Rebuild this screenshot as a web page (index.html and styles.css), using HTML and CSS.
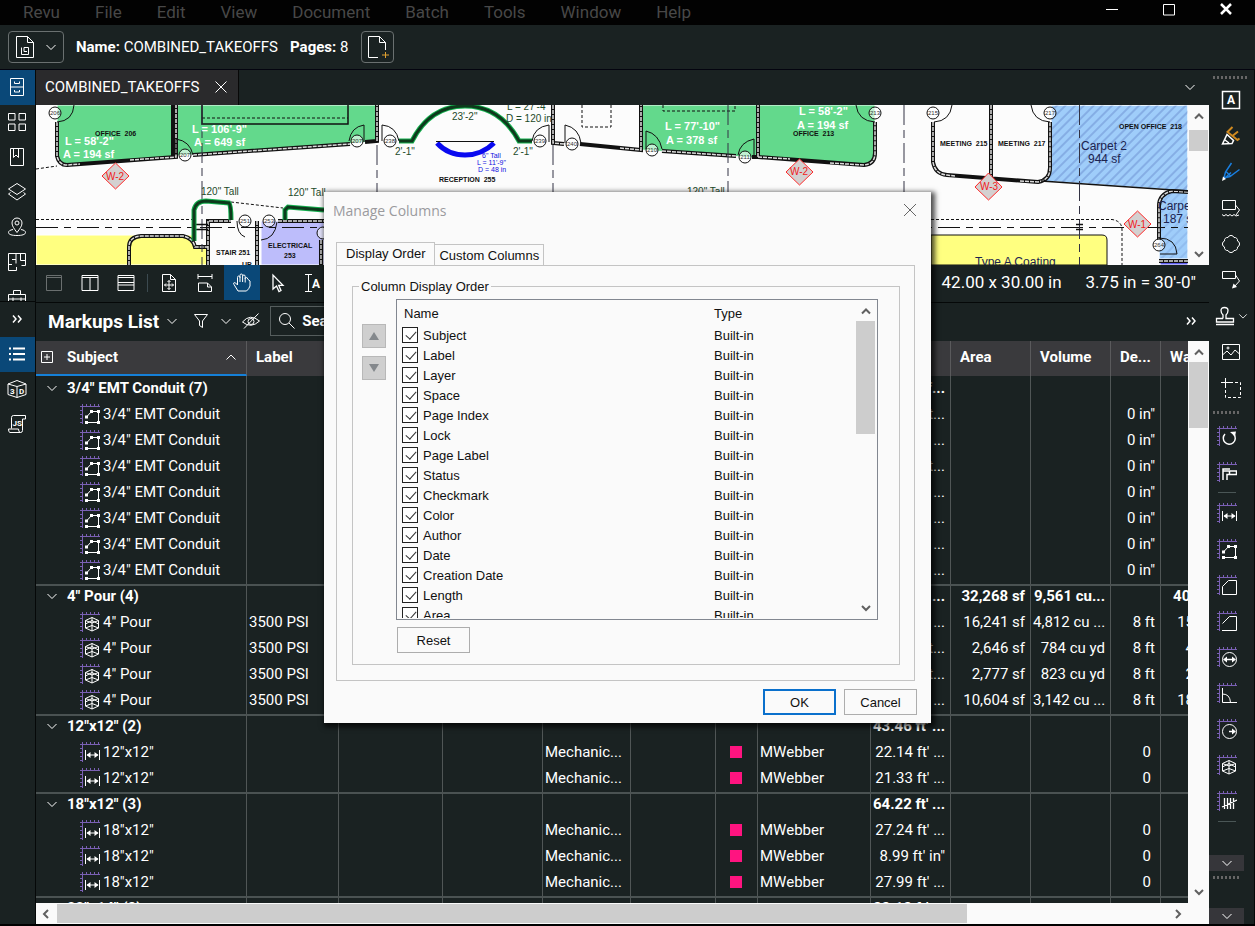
FILE: index.html
```html
<!DOCTYPE html>
<html lang="en">
<head>
  <meta charset="UTF-8">
  <meta name="viewport" content="width=device-width, initial-scale=1.0">
  <title>Revu</title>
  <link rel="stylesheet" href="styles.css">
</head>
<body>

  <!-- Icon sprite -->
  <svg class="sprite">
    <symbol id="ruler" viewBox="0 0 20 20"><path d="M0 2.5H20M2.5 0V20M6.500 0V2M10.500 0V2M14.500 0V2M18.500 0V2M0 6.500H2M0 10.500H2M0 14.500H2M0 18.500H2" stroke="#7a60b4" fill="none"/></symbol>
    <symbol id="i-poly" viewBox="0 0 20 20"><use href="#ruler"/><path d="M6.500 13L11.500 7.500H18.500V18.500H6.500" /><path d="M5 11.500h3v3h-3zM10 6h3v3h-3zM17 6h3v3h-3zM17 17h3v3h-3zM5 17h3v3h-3z" fill="#fff" stroke="none"/></symbol>
    <symbol id="i-volume" viewBox="0 0 20 20"><use href="#ruler"/><path d="M5.500 8.500L12 5.500L18.500 8.500V16L12 19L5.500 16ZM5.500 8.500L12 11L18.500 8.500M12 5.500V19M5.500 16L12 13.500L18.500 16M5.500 12L12 8.500L18.500 12"/></symbol>
    <symbol id="i-length" viewBox="0 0 20 20"><use href="#ruler"/><path d="M5.500 8V18M19.500 8V18M7 13H18"/><path d="M6.500 13l4-3v6zM18.500 13l-4-3v6z" fill="#fff" stroke="none"/></symbol>
    <symbol id="i-down" viewBox="0 0 12 12"><path d="M1.500 4L6 8.500L10.500 4"/></symbol>
    <symbol id="i-up" viewBox="0 0 12 12"><path d="M1.500 8.500L6 4L10.500 8.500"/></symbol>
    <symbol id="i-more" viewBox="0 0 12 12"><path d="M2 2.500L5 6L2 9.500M7 2.500L10 6L7 9.500" stroke-width="1.500"/></symbol>
  </svg>

  <!-- Menu bar -->
  <header class="menubar">
    <nav class="menus">
      <button>Revu</button>
      <button>File</button>
      <button>Edit</button>
      <button>View</button>
      <button>Document</button>
      <button>Batch</button>
      <button>Tools</button>
      <button>Window</button>
      <button>Help</button>
    </nav>
    <div class="window-controls">
      <button aria-label="Minimize"><svg width="14" height="14"><path d="M1 7.500H13"/></svg></button>
      <button aria-label="Maximize"><svg width="14" height="14"><path d="M1.500 2.500H12.500V13H1.500Z"/></svg></button>
      <button aria-label="Close"><svg width="14" height="14"><path d="M2 2L12 12M12 2L2 12" stroke-width="2.500"/></svg></button>
    </div>
  </header>

  <!-- Document info -->
  <div class="docbar">
    <button class="outline-btn" aria-label="Document properties">
      <svg width="20" height="24"><path d="M1.500 1.500H12.500L18.500 7.500V22.500H1.500ZM12.500 1.500V7.500H18.500M6.500 12.500V19.500H13.500V12.500H9V16.500H12"/></svg>
      <svg width="12" height="12"><use href="#i-down"/></svg>
    </button>
    <p class="doc-name"><b>Name:</b> COMBINED_TAKEOFFS</p>
    <p class="doc-pages"><b>Pages:</b> 8</p>
    <button class="outline-btn" aria-label="Add page">
      <svg width="22" height="24"><path d="M11 22.500H1.500V1.500H12.500L18.500 7.500V15M12.500 1.500V7.500H18.500"/><path d="M18.500 17V23M15 20H22" stroke="#e0a030"/></svg>
    </button>
  </div>

  <div class="workspace">

    <!-- Left rail -->
    <aside class="rail">
      <div class="rail-top">
        <button class="active" aria-label="File access"><svg width="18" height="20"><path d="M2.500 1.500H15.500V18.500H2.500ZM2.500 10H15.500M6.500 4.500V6.500H11.500V4.500M6.500 13V15H11.500V13"/></svg></button>
        <button aria-label="Thumbnails"><svg width="20" height="20"><path d="M1.500 1.500H8V8H1.500ZM12 1.500H18.500V8H12ZM1.500 12H8V18.500H1.500ZM12 12H18.500V18.500H12Z"/></svg></button>
        <button aria-label="Bookmarks"><svg width="18" height="20"><path d="M2.500 1.500H15.500V18.500H2.500ZM5.500 1.500V10.500L8 8L10.500 10.500V1.500"/></svg></button>
        <button aria-label="Layers"><svg width="20" height="20"><path d="M10 1.500L18.500 7L10 12.500L1.500 7ZM3.500 10.500L1.500 12L10 18L18.500 12L16.500 10.500"/></svg></button>
        <button aria-label="Places"><svg width="20" height="20"><path d="M10 15.500C7 11.500 5 9 5 6A5 5 0 0 1 15 6C15 9 13 11.500 10 15.500Z"/><circle cx="10" cy="6" r="2"/><path d="M6 12.500C3 13 1.500 14 1.500 15.500C1.500 17.500 5 18.500 10 18.500S18.500 17.500 18.500 15.500C18.500 14 17 13 14 12.500"/></svg></button>
        <button aria-label="Spaces"><svg width="20" height="20"><path d="M9 11.500V1.500M9 7.500H5M1.500 14V1.500H18.500V13.500H14.500M1.500 10V18.500H9.500V15M1.500 12.500H5M13.500 1.500V8.500H18.500"/></svg></button>
        <button aria-label="Tool chest"><svg width="20" height="20"><path d="M1.500 7.500H18.500V18.500H1.500ZM6.500 7.500V3.500H13.500V7.500M1.500 12H18.500M6 10.500V14M14 10.500V14"/></svg></button>
      </div>
      <div class="rail-bottom">
        <button aria-label="Expand"><svg width="12" height="12"><use href="#i-more"/></svg></button>
        <button class="active" aria-label="Markups list"><svg width="18" height="16"><path d="M5 2.500H17M5 8H17M5 13.500H17M1 2.500H3M1 8H3M1 13.500H3" stroke-width="2"/></svg></button>
        <button aria-label="3D model tree"><svg width="20" height="20"><path d="M1 5L10 1.500L19 5V15.500L10 18.500L1 15.500ZM1 5L10 7.500L19 5M10 7.500V18.500"/><text x="3" y="15" class="ico-text">3</text><text x="12" y="15" class="ico-text">D</text></svg></button>
        <button aria-label="JavaScript"><svg width="20" height="20"><path d="M4.500 14.500V3.500Q4.500 1.500 6.500 1.500H18.500V5H15.500V16.500Q15.500 18.500 13.500 18.500H3Q1.500 18.500 1.500 15H11.500Q11.500 18.500 13.500 18.500"/><text x="5.500" y="12" class="ico-text">JS</text></svg></button>
      </div>
    </aside>

    <main class="center">
      <div class="tabs">
        <div class="tab">
          <span>COMBINED_TAKEOFFS</span>
          <button aria-label="Close tab"><svg width="14" height="14"><path d="M1.500 1.500L12.500 12.500M12.500 1.500L1.500 12.500"/></svg></button>
        </div>
        <button class="tab-list" aria-label="Open tabs"><svg width="12" height="12"><use href="#i-down"/></svg></button>
      </div>

      <!-- Floor plan -->
      <div class="viewer">
        <svg class="plan" viewBox="36 105 1152 160" preserveAspectRatio="xMinYMin slice">
          <defs>
            <pattern id="hatch" width="13" height="13" patternUnits="userSpaceOnUse" patternTransform="rotate(45)"><path d="M3 0V13M9 0V13" stroke="#6c8fd0" stroke-width="1" fill="none"/></pattern>
          </defs>
          <rect x="36" y="105" width="1152" height="160" fill="#fcfcfc"/>

          <!-- rooms -->
          <g fill="#63d98c">
            <path d="M57 105V158Q59 165 67 165L173 157V105Z"/>
            <path d="M175 105V156L360 143L377 141V105Z"/>
            <path d="M641 105V150L757 158V105Z"/>
            <path d="M759 105V158L864 165Q875 164 875 153V105Z"/>
          </g>
          <path d="M1051 105V168Q1050 178 1041 181L1188 191V105Z" fill="#9fcdfa"/>
          <path d="M1051 105V168Q1050 178 1041 181L1188 191V105Z" fill="url(#hatch)"/>
          <path d="M1188 192L1172 191Q1159 194 1159 206V265H1188Z" fill="#9fcdfa"/>
          <path d="M1188 192L1172 191Q1159 194 1159 206V265H1188Z" fill="url(#hatch)" opacity=".5"/>
          <path d="M1160 259H1188V265H1160Z" fill="#5c5cf0"/>
          <path d="M36 235H193L196 247H208V265H36Z" fill="#ffff80"/>
          <path d="M931 235H1102Q1107 235 1107 240V265H931Z" fill="#ffff80" stroke="#111"/>
          <path d="M261 221H324V265H261Z" fill="#bdbdfb"/>

          <!-- walls: black line with a light core -->
          <g class="wall">
            <path d="M57 122V156Q59 165 67 165L176 157V105"/>
            <path d="M173 105V157M193 155L350 144M365 142L377 141V105"/>
            <path d="M553 105V143L564 144M580 144L641 150V105M662 151L736 156M752 157L758 157V105"/>
            <path d="M758 157L864 165Q875 164 875 153V122"/>
            <path d="M933 122V162Q935 174 947 175L1038 182Q1050 180 1050 168V122M991 105V178"/>
            <path d="M1188 192L1172 191Q1159 194 1159 206V240M1159 261H1188"/>
            <path d="M129 265V247Q129 237 141 236H183Q193 238 195 247H208"/>
            <path d="M208 265V221H231M257 221V265M278 221H324M321 240V265"/>
          </g>
          <g class="core">
            <path d="M57 122V156Q59 165 67 165L80 164M130 160L176 157V105"/>
            <path d="M193 155L350 144M377 141V105"/>
            <path d="M553 105V143L564 144M620 148L641 150V105M662 151L736 156M758 157V105"/>
            <path d="M758 157L790 159M830 163L864 165Q875 164 875 153V122"/>
            <path d="M933 122V162Q935 174 947 175L955 176M1020 181L1038 182Q1050 180 1050 168V122M991 105V178"/>
            <path d="M1188 192L1172 191Q1159 194 1159 206V240M1159 261H1188"/>
            <path d="M129 265V247Q129 237 141 236H183Q193 238 195 247H208"/>
            <path d="M208 265V221H231M257 221V265M278 221H324M321 240V265"/>
          </g>

          <g fill="none" stroke="#111">
            <path d="M202 105V124H348V105M1041 181L1188 191" stroke-width="1.500"/>
            <path d="M202 118H348M582 105V127H611V105M663 105V111H735V105" stroke-dasharray="3 2"/>
            <path d="M36 169L57 166M231 202L283 208M36 219.500H195M931 219.500H1112Q1122 221 1122 230V265" stroke-dasharray="3 2"/>
            <path d="M36 227.500H1188" stroke-dasharray="22 6 7 6"/>
            <path d="M202 105V265M377 145V192M553 145V192M728 105V192M904 105V192M1079.500 105V265" stroke-dasharray="20 5 8 5" stroke="#334"/>
            <path d="M196 224.500H208M196 229.500H208M1076 224.500H1083M1076 229.500H1083" stroke-width="1.500"/>
          </g>

          <!-- doors -->
          <g fill="none" stroke="#111">
            <path d="M74 105Q73 121 57 122M176 155V139Q190 141 193 155M364 142V125Q351 127 349 141M382 141V125Q396 126 399 141M549 142V125Q534 127 532 141M565 143V125Q579 128 581 143M646 149V131Q659 134 662 149M754 156V139Q740 142 738 155M856 105Q858 121 875 122M952 105Q950 121 934 122M1031 105Q1033 121 1050 122M1159 238Q1176 238 1177 254H1160M237 221Q237 234 245 237M261 240Q275 239 277 222"/>
            <g fill="#fff" fill-opacity=".6">
              <circle cx="55" cy="113" r="6"/><circle cx="185" cy="155" r="6"/><circle cx="357" cy="141" r="6"/><circle cx="390" cy="141" r="6"/><circle cx="540" cy="141" r="6"/><circle cx="572" cy="144" r="6"/><circle cx="652" cy="150" r="6"/><circle cx="745" cy="157" r="6"/><circle cx="875" cy="113" r="6"/><circle cx="933" cy="113" r="6"/><circle cx="1050" cy="113" r="6"/><circle cx="1159" cy="245" r="6"/><circle cx="245" cy="221" r="6"/><circle cx="269" cy="221" r="6"/><circle cx="323" cy="233" r="6"/>
            </g>
          </g>
          <g class="door-no">
            <text x="55" y="115">206</text><text x="185" y="157">207</text><text x="357" y="143">207</text><text x="390" y="143">238</text><text x="540" y="143">239</text><text x="572" y="146">240</text><text x="652" y="152">210</text><text x="745" y="159">211</text><text x="875" y="115">213</text><text x="933" y="115">215</text><text x="1050" y="115">217</text><text x="1159" y="247">264</text><text x="245" y="223">251</text><text x="269" y="223">253</text>
          </g>

          <!-- green and blue markups -->
          <g fill="none" stroke="#14b04e" stroke-width="5">
            <path d="M399 141H412Q430 106 465 106T519 141H532M194 241V210Q196 201 206 201L229 203Q231 205 231 220M285 220V210L288 207L324 210"/>
          </g>
          <path d="M399 141H412Q430 106 465 106T519 141H532M194 241V210Q196 201 206 201L229 203Q231 205 231 220M285 220V210L288 207L324 210" fill="none" stroke="#0d3a1c" stroke-width="3"/>
          <path d="M437 143Q448 155 465 155T494 143" fill="none" stroke="#0a0af0" stroke-width="5"/>
          <path d="M436 141.500H494" stroke="#111"/>

          <!-- revision diamonds -->
          <g fill="#d4d0d0" stroke="#ff2a2a">
            <path d="M115.500 163L129 176L115.500 189L102 176Z"/><path d="M799.500 159L813 172L799.500 185L786 172Z"/><path d="M988.500 173L1002 187L988.500 200L975 187Z"/><path d="M1137.500 211L1151 224L1137.500 237L1124 224Z"/>
          </g>
          <g class="dia">
            <text x="115" y="180">W-2</text><text x="799" y="175">W-2</text><text x="989" y="190">W-3</text><text x="1137" y="228">W-1</text>
          </g>

          <g class="room">
            <text x="95" y="136">OFFICE  206</text><text x="439" y="182">RECEPTION  255</text><text x="793" y="136">OFFICE  213</text><text x="940" y="146">MEETING  215</text><text x="998" y="146">MEETING  217</text><text x="1119" y="129">OPEN OFFICE  218</text><text x="216" y="255">STAIR 251</text><text x="268" y="248">ELECTRICAL</text><text x="284" y="258">253</text><text x="242" y="267">UP</text>
          </g>
          <g class="size">
            <text x="65" y="145">L = 58'-2"</text><text x="63" y="158">A = 194 sf</text><text x="192" y="133">L = 106'-9"</text><text x="194" y="146">A = 649 sf</text><text x="665" y="130">L = 77'-10"</text><text x="666" y="144">A = 378 sf</text><text x="799" y="115">L = 58'-2"</text><text x="797" y="129">A = 194 sf</text>
          </g>
          <g class="tall">
            <text x="201" y="195">120" Tall</text><text x="288" y="196">120" Tall</text><text x="687" y="195">120" Tall</text><text x="452" y="120">23'-2"</text><text x="507" y="110">L = 27'-4"</text><text x="506" y="122">D = 120 in</text><text x="395" y="155">2'-1"</text><text x="513" y="155">2'-1"</text>
          </g>
          <g class="blue">
            <text x="482" y="158">6" Tall</text><text x="477" y="165">L = 11'-9"</text><text x="478" y="172">D = 48 in</text>
          </g>
          <g class="carpet">
            <text x="1081" y="150">Carpet 2</text><text x="1088" y="163">944 sf</text><text x="1158" y="210">Carpe</text><text x="1163" y="223">187 s</text><text x="975" y="266">Type A Coating</text>
          </g>
        </svg>
        <div class="vscroll">
          <svg width="14" height="21"><path d="M3 13.500L7 9.500L11 13.500"/></svg>
          <div class="vscroll-track"><div class="thumb short"></div></div>
          <svg width="14" height="21"><path d="M3 8L7 12L11 8"/></svg>
        </div>
      </div>

      <!-- Status bar -->
      <div class="statusbar">
        <button class="dim" aria-label="Single view"><svg width="18" height="18"><path d="M1.500 1.500H16.500V16.500H1.500ZM1.500 3.500H16.500"/></svg></button>
        <button aria-label="Split vertical"><svg width="18" height="18"><path d="M1 1.500H17V16.500H1ZM1 3.500H17M9 3V17"/></svg></button>
        <button aria-label="Split horizontal"><svg width="18" height="18"><path d="M1 1.500H17V16.500H1ZM1 3.500H17M1 8.500H17M1 11H17"/></svg></button>
        <span class="sep"></span>
        <button aria-label="Single page"><svg width="20" height="20"><path d="M2.500 1.500H10.500L15.500 6.500V18.500H2.500ZM10.500 1.500V6.500H15.500M9 7.500V16.500M4.500 12H13.500M7.500 9L9 7.500L10.500 9M7.500 15L9 16.500L10.500 15M6 10.500L4.500 12L6 13.500M12 10.500L13.500 12L12 13.500"/></svg></button>
        <button aria-label="Fit width"><svg width="20" height="20"><path d="M2 1V6M16 1V6M2 3.500H16M2.500 10H11.500L15.500 14V18.500H2.500ZM11.500 10V14H15.500"/></svg></button>
        <button class="active" aria-label="Pan"><svg width="20" height="20"><path d="M6 18L2 11.500Q1 9.500 2.500 9.500Q3.500 9.500 5.500 12V4.500Q5.500 3 6.700 3T8 4.500V2.500Q8 1 9.300 1T10.600 2.500V3Q10.600 2 11.900 2T13.200 3.500V5.500Q13.200 4.500 14.400 4.500T15.600 6L18 8V13Q17 16 14.500 18ZM8 4V9M10.600 3V9M13.200 5V9.500"/></svg></button>
        <button aria-label="Select"><svg width="18" height="20"><path d="M4 2V16L7.500 13L10 18.500L12 17.500L9.700 12.300H14Z" stroke-width="1.300"/></svg></button>
        <button aria-label="Select text"><svg width="20" height="20"><path d="M4.500 1V19M1 1.500H8M1 18.500H8"/><text x="8" y="15" class="ico-a">A</text></svg></button>
        <span class="fill"></span>
        <span class="readout">42.00 x 30.00 in</span>
        <span class="readout">3.75 in = 30'-0"</span>
      </div>

      <!-- Markups list -->
      <div class="list-bar">
        <h1>Markups List</h1>
        <svg width="12" height="12"><use href="#i-down"/></svg>
        <svg class="funnel" width="16" height="16"><path d="M1.500 1.500H14.500L9.500 8V14.500L6.500 12.500V8Z"/></svg>
        <svg width="12" height="12"><use href="#i-down"/></svg>
        <svg class="eye" width="20" height="18"><path d="M1.500 10Q9 1 18.500 9Q10 17 1.500 10ZM17.500 1.500L3 16.500"/><circle cx="10" cy="9.500" r="3"/></svg>
        <label class="search">
          <svg width="18" height="18"><circle cx="7" cy="7" r="5.500"/><path d="M11 11L16.500 16.500"/></svg>
          <input type="text" placeholder="Search" aria-label="Search">
        </label>
        <button class="more" aria-label="More"><svg width="12" height="12"><use href="#i-more"/></svg></button>
      </div>

      <div class="list-body">
        <div class="table-wrap">
          <table>
            <colgroup>
              <col class="c-subject"><col class="c-label"><col class="c-layer"><col class="c-space"><col class="c-page"><col class="c-status"><col class="c-color"><col class="c-author"><col class="c-num"><col class="c-num"><col class="c-num"><col class="c-depth"><col class="c-wall">
            </colgroup>
            <thead>
              <tr>
                <th class="sorted"><div class="head"><svg width="12" height="12"><path d="M.5 .5H11.500V11.500H.5ZM3 6H9M6 3V9"/></svg><span>Subject</span><svg width="12" height="12"><use href="#i-up"/></svg></div></th>
                <th>Label</th><th></th><th></th><th></th><th></th><th></th><th></th><th></th>
                <th>Area</th><th>Volume</th><th>De...</th><th>Wa...</th>
              </tr>
            </thead>
            <tbody id="markups"></tbody>
          </table>
        </div>
        <div class="vscroll">
          <svg width="14" height="21"><path d="M3 13.500L7 9.500L11 13.500"/></svg>
          <div class="vscroll-track"><div class="thumb tall-thumb"></div></div>
          <svg width="14" height="21"><path d="M3 8L7 12L11 8"/></svg>
        </div>
      </div>
      <div class="hscroll">
        <svg width="21" height="14"><path d="M12 3L8 7L12 11"/></svg>
        <div class="hscroll-track"><div class="thumb"></div></div>
        <svg width="21" height="14"><path d="M9 3L13 7L9 11"/></svg>
      </div>
    </main>

    <!-- Right toolbar -->
    <aside class="tools">
      <div class="grip wide"></div>
      <div class="tool-group markup">
        <button aria-label="Text box"><svg width="20" height="20"><path d="M1.500 1.500H18.500V18.500H1.500Z" stroke-width="1.500"/><text x="6" y="14" class="ico-a">A</text></svg></button>
        <button aria-label="Highlight"><svg width="20" height="20"><path d="M11.500 1L6.500 6L16.500 14L18.500 12.500M12 9.500L17 5.500" stroke="#d08a20" stroke-width="2"/><path d="M6 8.500L12.500 14.500L11 17.500L1.500 18ZM4 14L8 17" stroke-width="1.500"/></svg></button>
        <button aria-label="Pen"><svg width="20" height="20"><path d="M10.500 1L4.500 10L3 16L9 14.500L18.500 7.500M5.500 10L9.500 14M4 16L10 10.500" stroke="#1a7fe0" stroke-width="1.500"/><path d="M1 19L2 14.500L5 17Z" fill="#fff" stroke="none"/></svg></button>
        <button aria-label="Callout"><svg width="20" height="20"><path d="M1.500 2.500H14.500V11.500H1.500ZM14.500 7L18.500 12L15 17M1 16.500L3 18L5 16.500L7 18L9 16.500L11 18L13 16.500L15 18L18 17"/></svg></button>
        <button aria-label="Cloud"><svg width="20" height="20"><path d="M7 3.500A3.200 3.200 0 0 1 13 3.500A3 3 0 0 1 16.500 7A3.200 3.200 0 0 1 16.500 13A3 3 0 0 1 13 16.500A3.200 3.200 0 0 1 7 16.500A3 3 0 0 1 3.500 13A3.200 3.200 0 0 1 3.500 7A3 3 0 0 1 7 3.500Z"/></svg></button>
        <button aria-label="Leader"><svg width="20" height="20"><path d="M1.500 1.500H14.500V8.500H1.500ZM14.500 5L18.500 11L13 17"/><path d="M11 18.500L12.500 13.500L16 17Z" fill="#fff" stroke="none"/></svg></button>
        <button class="stamp" aria-label="Stamp"><svg width="20" height="20"><path d="M8 12.500V9Q6 7 6 4.500Q6 1.500 9.500 1.500T13 4.500Q13 7 11 9V12.500H18.500V16H1.500V12.500H8M1 18.500H19" stroke-width="1.300"/></svg><svg width="10" height="10" viewBox="0 0 12 12"><use href="#i-down"/></svg></button>
        <button aria-label="Image"><svg width="20" height="20"><path d="M1.500 2.500H18.500V17.500H1.500ZM1.500 13L6 9L10 13L14 8L18.500 12"/><circle cx="7" cy="6" r="1"/></svg></button>
        <button aria-label="Crop"><svg width="20" height="20"><path d="M4.500 0V9M0 4.500H9"/><path d="M9 4.500H19.500V19.500H4.500V9" stroke-dasharray="3 2"/></svg></button>
      </div>
      <div class="grip"></div>
      <div class="tool-group">
        <button aria-label="Calibrate"><svg width="20" height="20"><use href="#ruler"/><path d="M8 8A6 6 0 1 0 17 8.500" stroke-width="1.500"/><path d="M13 6L19 5.500L18 10.500Z" fill="#fff" stroke="none"/></svg></button>
        <button aria-label="Measure"><svg width="20" height="20"><use href="#ruler"/><path d="M6 18V7H13M6 9H19.500V12.500H10V18M12.500 9V12" stroke-width="1.500"/></svg></button>
      </div>
      <div class="rule"></div>
      <div class="tool-group">
        <button aria-label="Length"><svg width="20" height="20"><use href="#i-length"/></svg></button>
        <button aria-label="Polylength"><svg width="20" height="20"><use href="#i-poly"/></svg></button>
        <button aria-label="Area"><svg width="20" height="20"><use href="#ruler"/><path d="M5.500 11.500L11.500 5.500H19.500V19.500H5.500Z"/></svg></button>
        <button aria-label="Perimeter"><svg width="20" height="20"><use href="#ruler"/><path d="M5.500 12.500L12.500 5.500H19.500V19.500H5"/></svg></button>
        <button aria-label="Diameter"><svg width="20" height="20"><use href="#ruler"/><circle cx="12.500" cy="12.500" r="7"/><path d="M8 12.500H17" stroke-width="1.500"/><path d="M6 12.500l4-3v6zM19 12.500l-4-3v6z" fill="#fff" stroke="none"/></svg></button>
        <button aria-label="Angle"><svg width="20" height="20"><use href="#ruler"/><path d="M5.500 5V19.500H20M5.500 11Q13 11 13.500 19.500"/></svg></button>
        <button aria-label="Radius"><svg width="20" height="20"><use href="#ruler"/><circle cx="12.500" cy="12.500" r="7"/><path d="M12 12.500H17" stroke-width="1.500"/><path d="M19 12.500l-4-3v6z" fill="#fff" stroke="none"/></svg></button>
        <button aria-label="Volume"><svg width="20" height="20"><use href="#i-volume"/></svg></button>
        <button aria-label="Count"><svg width="20" height="20"><use href="#ruler"/><path d="M7.500 7V18M10.500 7V18M13.500 7V18M16.500 7V18M5 16L20 9" stroke-width="1.300"/></svg></button>
      </div>
      <div class="rule"></div>
      <span class="fill"></span>
      <button class="drop" aria-label="More tools"><svg width="12" height="12"><use href="#i-down"/></svg></button>
      <div class="grip"></div>
      <button class="drop last" aria-label="More toolbars"><svg width="12" height="12"><use href="#i-down"/></svg></button>
    </aside>
  </div>

  <!-- Manage Columns dialog -->
  <section class="dialog" role="dialog" aria-labelledby="dlgTitle">
    <div class="dialog-title">
      <h2 id="dlgTitle">Manage Columns</h2>
      <button aria-label="Close dialog"><svg width="14" height="14"><path d="M1 1L13 13M13 1L1 13"/></svg></button>
    </div>
    <div class="dialog-tabs">
      <button class="current">Display Order</button>
      <button>Custom Columns</button>
    </div>
    <div class="panel">
      <fieldset>
        <legend>Column Display Order</legend>
        <div class="order">
          <div class="movers">
            <button aria-label="Move up"><svg width="12" height="10"><path d="M6 1L11 9H1Z"/></svg></button>
            <button aria-label="Move down"><svg width="12" height="10"><path d="M6 9L11 1H1Z"/></svg></button>
          </div>
          <div class="columns">
            <div class="columns-list">
              <div class="columns-head"><span>Name</span><span>Type</span></div>
              <div id="columnRows"></div>
            </div>
            <div class="vscroll">
              <svg width="14" height="21"><path d="M3 13.500L7 9.500L11 13.500"/></svg>
              <div class="vscroll-track"><div class="thumb list-thumb"></div></div>
              <svg width="14" height="21"><path d="M3 8L7 12L11 8"/></svg>
            </div>
          </div>
        </div>
        <button class="dlg-btn reset">Reset</button>
      </fieldset>
    </div>
    <div class="dialog-actions">
      <button class="dlg-btn primary">OK</button>
      <button class="dlg-btn">Cancel</button>
    </div>
  </section>

  <script>
    // length, area, volume, depth, wall
    const groups = [
      { name: '3/4" EMT Conduit', count: 7, icon: 'poly', total: ['sf...'], rows: [
        ['ft...', '', '', '0 in"'], ['...', '', '', '0 in"'], ['ft...', '', '', '0 in"'], ['...', '', '', '0 in"'],
        ['...', '', '', '0 in"'], ['...', '', '', '0 in"'], ['...', '', '', '0 in"']] },
      { name: '4" Pour', count: 4, icon: 'volume', label: '3500 PSI', total: ['...', '32,268 sf', '9,561 cu...', '', '40,'], rows: [
        ['...', '16,241 sf', '4,812 cu ...', '8 ft', '15'], ['ft...', '2,646 sf', '784 cu yd', '8 ft', '4'],
        ['ft...', '2,777 sf', '823 cu yd', '8 ft', '2'], ['...', '10,604 sf', '3,142 cu ...', '8 ft', '18']] },
      { name: '12"x12"', count: 2, icon: 'length', status: 'Mechanic...', author: 'MWebber', total: ["43.46 ft' ..."], rows: [
        ["22.14 ft' ...", '', '', '0 '], ["21.33 ft' ...", '', '', '0 ']] },
      { name: '18"x12"', count: 3, icon: 'length', status: 'Mechanic...', author: 'MWebber', total: ["64.22 ft' ..."], rows: [
        ["27.24 ft' ...", '', '', '0 '], ['8.99 ft\' in"', '', '', '0 '], ["27.99 ft' ...", '', '', '0 ']] },
      { name: '22"x14"', count: 3, icon: 'length', total: ["33.13 ft' ..."], rows: [] }
    ];

    function numbers(list) {
      let html = '';
      for (let i = 0; i < 5; i++) {
        const text = list[i] || '';
        html += `<td class="num${text === '0 ' ? ' zero' : ''}">${text}</td>`;
      }
      return html;
    }

    let html = '';
    groups.forEach(function (g) {
      html += `<tr class="group"><td><div class="subject"><svg width="12" height="12"><use href="#i-down"/></svg><span>${g.name} (${g.count})</span></div></td>${'<td></td>'.repeat(7)}${numbers(g.total)}</tr>`;
      g.rows.forEach(function (r) {
        html += `<tr><td><div class="item"><svg width="20" height="20"><use href="#i-${g.icon}"/></svg><span>${g.name}</span></div></td>
          <td>${g.label || ''}</td><td></td><td></td><td>${g.status || ''}</td><td></td>
          <td>${g.author ? '<i class="swatch"></i>' : ''}</td><td>${g.author || ''}</td>${numbers(r)}</tr>`;
      });
    });
    document.getElementById('markups').innerHTML = html;

    const columns = ['Subject', 'Label', 'Layer', 'Space', 'Page Index', 'Lock', 'Page Label', 'Status', 'Checkmark', 'Color', 'Author', 'Date', 'Creation Date', 'Length', 'Area'];
    document.getElementById('columnRows').innerHTML = columns.map(function (c) {
      return `<label class="column-row"><input type="checkbox" checked><span>${c}</span><span>Built-in</span></label>`;
    }).join('');
  </script>

</body>
</html>
```
FILE: styles.css
```css
/* General */
* {
  box-sizing: border-box;
}

body {
  display: flex;
  flex-direction: column;
  height: 100vh;
  margin: 0;
  overflow: hidden;
  background-color: #1a2222;
  color: #fff;
  font-family: Roboto, "Liberation Sans", sans-serif;
  font-size: 15px;
  border-bottom: 2px solid #000;
}

button {
  display: flex;
  align-items: center;
  justify-content: center;
  padding: 0;
  border: none;
  background: none;
  color: inherit;
  font: inherit;
}

svg {
  flex: none;
  fill: none;
  stroke: #fff;
}

svg text {
  stroke: none;
  fill: #fff;
  white-space: pre;
}

.sprite {
  position: absolute;
  width: 0;
  height: 0;
}

.ico-text {
  font-size: 8px;
  font-weight: bold;
}

.ico-a {
  font-size: 12px;
  font-weight: bold;
}

.fill {
  flex: 1;
}

/* Menu bar */
.menubar {
  display: flex;
  flex: none;
  justify-content: space-between;
  height: 25px;
  background-color: #020202;
}

.menus {
  display: flex;
  gap: 1px;
  padding-left: 6px;
}

.menus button {
  padding: 0 17px 2px;
  color: #484848;
  font-size: 17px;
}

.window-controls {
  display: flex;
  align-items: flex-start;
  padding: 2px 22px 0 0;
  gap: 43px;
}

/* Document info */
.docbar {
  display: flex;
  flex: none;
  align-items: center;
  height: 45px;
  padding: 0 8px;
  border-bottom: 1px solid #04040f;
}

.docbar p {
  margin: 0 0 0 12px;
}

.outline-btn {
  gap: 10px;
  height: 32px;
  padding: 0 6px;
  border: 1px solid #6a7070;
  border-radius: 4px;
}

.doc-pages + .outline-btn {
  width: 33px;
  margin-left: 13px;
}

.workspace {
  display: flex;
  flex: 1;
  min-height: 0;
}

/* Left rail */
.rail {
  flex: none;
  width: 36px;
  border-right: 1px solid #050808;
}

.rail button {
  width: 35px;
  height: 35px;
  padding: 0 2px 2px 0;
}

.rail-top {
  height: 232px;
  overflow: hidden;
  border-bottom: 1px solid #050808;
}

.active {
  background-color: #0a4878;
}

/* Center */
.center {
  display: flex;
  flex: 1;
  flex-direction: column;
  min-width: 0;
}

.tabs {
  display: flex;
  flex: none;
  justify-content: space-between;
  height: 35px;
}

.tab {
  display: flex;
  align-items: center;
  gap: 15px;
  padding: 0 10px 2px 9px;
  background-color: #2a2a2c;
  border-right: 1px solid #080808;
}

.tab-list {
  margin: 0 13px 2px 0;
}

.viewer {
  display: flex;
  flex: none;
  height: 160px;
}

.plan {
  flex: 1;
  min-width: 0;
  height: 160px;
}

.wall {
  fill: none;
  stroke: #111;
  stroke-width: 4;
}

.core {
  fill: none;
  stroke: #ddd;
  stroke-width: 1.5;
  stroke-dasharray: 4 1;
}

.plan text {
  font-family: "Liberation Sans", Arial, sans-serif;
}

.plan .door-no text {
  fill: #333;
  font-size: 6px;
  text-anchor: middle;
}

.plan .dia text {
  fill: #f02020;
  font-size: 10px;
  text-anchor: middle;
}

.plan .room text {
  fill: #111;
  font-size: 7px;
  font-weight: bold;
}

.plan .size text {
  font-size: 11px;
  font-weight: bold;
}

.plan .tall text {
  fill: #1d4a2a;
  font-size: 10px;
}

.plan .blue text {
  fill: #1010e0;
  font-size: 7px;
}

.plan .carpet text {
  fill: #1c2450;
  font-size: 12px;
}

/* Scrollbars */
.vscroll {
  display: flex;
  flex: none;
  flex-direction: column;
  align-items: center;
  width: 21px;
  background-color: #fafafa;
}

.vscroll svg,
.hscroll svg {
  stroke: #606060;
  stroke-width: 2;
}

.vscroll-track {
  flex: 1;
  width: 100%;
  padding: 0 1px;
}

.thumb {
  background-color: #cdcdcd;
}

.short {
  height: 21px;
  margin-top: 4px;
}

.tall-thumb {
  height: 66px;
}

.list-thumb {
  height: 113px;
}

.hscroll {
  display: flex;
  flex: none;
  align-items: center;
  height: 21px;
  padding-right: 21px;
  background-color: #fafafa;
}

.hscroll-track {
  flex: 1;
}

.hscroll-track .thumb {
  width: 82%;
  height: 19px;
}

/* Status bar */
.statusbar {
  display: flex;
  flex: none;
  align-items: center;
  height: 38px;
  padding-bottom: 2px;
  border-bottom: 1px solid #050808;
  white-space: nowrap;
}

.statusbar button {
  width: 36px;
  height: 35px;
}

.statusbar .dim {
  opacity: .35;
}

.sep {
  width: 1px;
  height: 18px;
  margin: 0 4px 0 3px;
  background-color: #3c4a50;
}

.readout {
  margin-right: 13px;
  padding: 0 0 2px 11px;
  font-size: 17px;
}

/* Markups list */
.list-bar {
  display: flex;
  flex: none;
  align-items: center;
  height: 38px;
  padding: 0 12px 2px;
}

.list-bar h1 {
  margin: 0 7px 0 0;
  font-size: 19px;
}

.funnel {
  margin: 0 11px 0 15px;
}

.eye {
  margin: 0 9px;
}

.search {
  display: flex;
  align-items: center;
  width: 300px;
  height: 30px;
  padding-left: 7px;
  border: 1px solid #555d5d;
}

.search input {
  width: 200px;
  margin-left: 6px;
  padding: 0;
  border: none;
  background: none;
  color: #fff;
  font: bold 15px Roboto, sans-serif;
}

.search input::placeholder {
  color: #fff;
}

.more {
  margin-left: auto;
}

.list-body {
  display: flex;
  flex: 1;
  min-height: 0;
}

.table-wrap {
  flex: 1;
  min-width: 0;
  overflow: hidden;
}

table {
  width: 1161px;
  border-collapse: separate;
  border-spacing: 0;
  table-layout: fixed;
}

.c-subject { width: 211px; }
.c-label { width: 92px; }
.c-layer { width: 104px; }
.c-space { width: 100px; }
.c-page { width: 88px; }
.c-status { width: 85px; }
.c-color { width: 42px; }
.c-author { width: 113px; }
.c-num { width: 80px; }
.c-depth { width: 50px; }
.c-wall { width: 36px; }

th {
  height: 35px;
  padding: 0 0 4px 9px;
  background-color: #3a3a3d;
  border-right: 1px solid #5a5a5c;
  text-align: left;
  white-space: nowrap;
}

th.sorted {
  padding: 0 0 2px;
  border-bottom: 2px solid #1580d8;
}

.head {
  display: flex;
  align-items: center;
  padding: 0 9px 0 5px;
}

.head span {
  flex: 1;
  margin-left: 14px;
}

td {
  height: 26px;
  padding: 0 0 2px 2px;
  border-right: 1px solid #505656;
  white-space: nowrap;
}

th:last-child,
td:last-child {
  border-right: none;
}

.group td {
  font-weight: bold;
}

.group:not(:first-child) td {
  border-top: 2px solid #4a5252;
  padding-bottom: 4px;
}

td.num {
  padding-right: 5px;
  text-align: right;
}

td.zero {
  padding-right: 9px;
}

td:last-child {
  padding-right: 3px;
}

.subject,
.item {
  display: flex;
  align-items: center;
  height: 20px;
}

.subject {
  gap: 9px;
  padding-left: 8px;
}

.item {
  gap: 3px;
  padding-left: 42px;
}

.swatch {
  display: block;
  width: 12px;
  height: 12px;
  margin-left: 12px;
  background-color: #ff1480;
}

/* Right toolbar */
.tools {
  display: flex;
  flex: none;
  flex-direction: column;
  width: 46px;
  border-right: 1px solid #050808;
}

.tools button {
  width: 36px;
  height: 36px;
}

.markup {
  padding: 0 0 0 4px;
}

.tools .stamp {
  gap: 3px;
}

.grip {
  flex: none;
  width: 28px;
  height: 3px;
  margin: 5px 0 4px 4px;
  background: repeating-linear-gradient(90deg, #666 0 2px, transparent 2px 4px);
}

.wide {
  width: 35px;
  margin: 6px 0 3px 4px;
}

.rule {
  flex: none;
  width: 18px;
  height: 1px;
  margin: 2px 0 2px 9px;
  background-color: #4a5656;
}

.tools .drop {
  width: 35px;
  height: 16px;
  background-color: #36363a;
}

.tools .last {
  margin-top: 25px;
}

/* Manage Columns dialog */
.dialog {
  position: absolute;
  top: 192px;
  left: 324px;
  display: flex;
  flex-direction: column;
  width: 607px;
  padding: 0 14px 8px 12px;
  background-color: #fafafa;
  box-shadow: 2px 2px 5px 2px rgba(0, 0, 0, .7);
  color: #111;
  font-family: "Liberation Sans", Arial, sans-serif;
  font-size: 13px;
}

.dialog-title {
  display: flex;
  align-items: center;
  justify-content: space-between;
  height: 38px;
  padding-bottom: 2px;
}

.dialog-title h2 {
  margin: 0 0 0 -3px;
  color: #9a9a9e;
  font: 14px "Open Sans", sans-serif;
}

.dialog-title svg {
  stroke: #666;
}

.dialog-tabs {
  display: flex;
  align-items: flex-end;
  height: 35px;
}

.dialog-tabs button {
  height: 21px;
  padding: 0 4px;
  border: 1px solid #c4c4c4;
  border-bottom: none;
  border-left: none;
}

.dialog-tabs .current {
  height: 24px;
  margin-bottom: -1px;
  padding: 0 9px 3px;
  border-left: 1px solid #c4c4c4;
  background-color: #fafafa;
}

.panel {
  width: 579px;
  padding: 13px 14px 15px 15px;
  border: 1px solid #c4c4c4;
}

fieldset {
  margin: 0;
  padding: 5px 21px 11px 9px;
  border: 1px solid #c4c4c4;
}

legend {
  margin-left: -3px;
  padding: 0 2px;
}

.order {
  display: flex;
  gap: 10px;
}

.movers {
  display: flex;
  flex-direction: column;
  gap: 8px;
  padding-top: 25px;
}

.movers button {
  width: 24px;
  height: 24px;
  border: 1px solid #b8b8b8;
  background-color: #cfcfcf;
}

.movers svg {
  fill: #84888c;
  stroke: none;
}

.columns {
  display: flex;
  flex: 1;
  height: 321px;
  padding-right: 1px;
  border: 1px solid #828790;
}

.columns-list {
  flex: 1;
  overflow: hidden;
  border-bottom: 1px solid #fafafa;
}

.columns-head,
.column-row {
  display: grid;
  grid-template-columns: 310px 1fr;
  align-items: center;
}

.columns-head {
  height: 25px;
  padding: 2px 0 0 7px;
}

.column-row {
  grid-template-columns: 16px 286px 1fr;
  gap: 5px;
  height: 20px;
  padding-left: 5px;
}

.column-row input {
  appearance: none;
  width: 16px;
  height: 16px;
  margin: 0;
  border: 1px solid #222;
  background-color: #fff;
}

/* tick mark */
.column-row input:checked::before {
  content: "";
  display: block;
  width: 5px;
  height: 9px;
  margin: 1px 0 0 5px;
  border: solid #333;
  border-width: 0 1px 1px 0;
  transform: rotate(42deg);
}

.dlg-btn {
  width: 73px;
  height: 26px;
  border: 1px solid #adadad;
}

.reset {
  margin: 7px 0 0 35px;
}

.primary {
  border: 2px solid #0a70cc;
}

.dialog-actions {
  display: flex;
  justify-content: flex-end;
  gap: 8px;
  padding-top: 8px;
}
```
